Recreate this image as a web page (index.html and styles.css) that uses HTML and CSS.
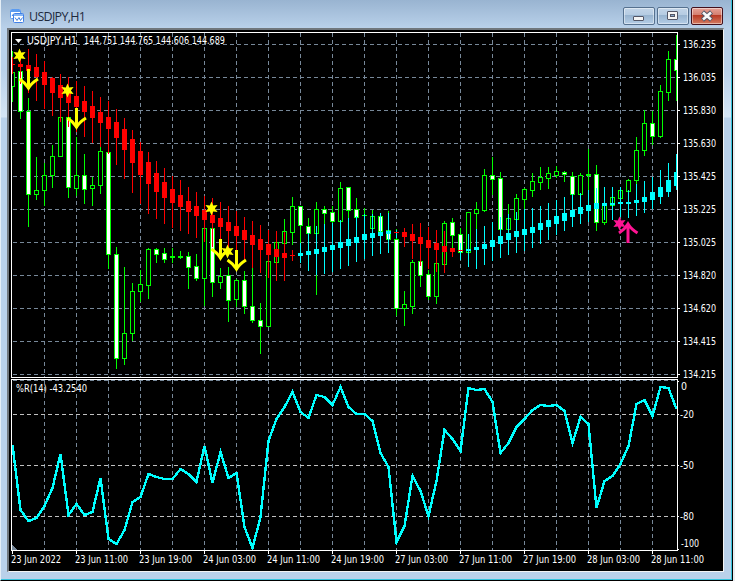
FILE: index.html
```html
<!DOCTYPE html>
<html lang="en">
  <head>
    <meta charset="UTF-8" />
    <meta name="viewport" content="width=device-width, initial-scale=1.0" />
    <title>USDJPY,H1</title>
    <link rel="stylesheet" href="styles.css">
  </head>
  <body>
    <div class="window">
      <header class="titlebar">
        <svg class="app-icon" width="15" height="15" viewBox="0 0 15 15">
          <rect x="0.5" y="0.5" width="10" height="9" rx="1" fill="#fff" stroke="#5b9bf0" />
          <path d="M1 2h9" stroke="#5b9bf0" stroke-width="2" />
          <path d="M2 7l1.500-2l1 1" fill="none" stroke="#3f80e0" />
          <rect x="3.500" y="4.500" width="10" height="9" rx="1" fill="#fff" stroke="#3f80e8" />
          <path d="M4 6h9" stroke="#5b9bf0" stroke-width="1.500" />
          <path d="M5 8.500l2 3l2-3l1.500 3l2-3" fill="none" stroke="#3f80e0" />
        </svg>
        <h1 class="title">USDJPY,H1</h1>
        <div class="controls">
          <button class="control" aria-label="Minimize">
            <svg width="12" height="12" viewBox="0 0 12 12">
              <rect x="0.500" y="6.500" width="10" height="4" rx="0.500" fill="#f4f4f4" stroke="#535666" />
            </svg>
          </button>
          <button class="control" aria-label="Maximize">
            <svg width="12" height="12" viewBox="0 0 12 12">
              <rect x="0.500" y="1.500" width="10" height="8" rx="0.500" fill="#f4f4f4" stroke="#535666" />
              <rect x="3.500" y="4.500" width="4" height="2" fill="#89a9c9" stroke="#535666" />
            </svg>
          </button>
          <button class="control close" aria-label="Close">
            <svg width="12" height="12" viewBox="0 0 12 12">
              <path d="M1.500 2L10.500 10M10.500 2L1.500 10" stroke="#535666" stroke-width="4.500" />
              <path d="M2 2.500L10 9.500M10 2.500L2 9.500" stroke="#f8f8f8" stroke-width="2.600" />
            </svg>
          </button>
        </div>
      </header>
      <main class="client">
        <svg id="chart" class="chart" width="714" height="541" viewBox="9 30 714 541"></svg>
      </main>
    </div>
    <script src="script.js"></script>
  </body>
</html>
```

FILE: styles.css
```css
body {
  margin: 0;
  background: #e9edf0;
}

.window {
  box-sizing: border-box;
  width: 733px;
  height: 581px;
  display: flex;
  flex-direction: column;
  background: linear-gradient(#99b4d1 0, #b9d1ea 28px, #b9d1ea 70px, #d5e5f5 117px, #b9d1ea 118px);
  border-left: 1px solid #e4eef6;
  border-right: 1px solid #000;
  border-bottom: 1px solid #000;
  box-shadow: inset -1px -1px #35c3dc;
  padding: 0 7px 7px 6px;
}

.titlebar {
  height: 28px;
  display: flex;
  align-items: flex-start;
}

.app-icon {
  margin: 9px 4px 0 3px;
}

.title {
  flex: 1;
  margin: 8px 0 0;
  font: 12.5px/17px "Open Sans", "Noto Sans", sans-serif;
  letter-spacing: -0.7px;
  color: #1e2a3c;
}

.controls {
  display: flex;
  gap: 2px;
  padding: 7px 2px 0 0;
}

.control {
  box-sizing: border-box;
  width: 32px;
  height: 18px;
  display: flex;
  align-items: center;
  justify-content: center;
  padding: 0;
  border: 1px solid #56718f;
  border-radius: 2px;
  background: linear-gradient(#c3d5e8 0, #b4cbe2 45%, #98b4d0 46%, #b4cde6 100%);
  box-shadow: inset 0 0 0 1px rgba(255, 255, 255, 0.45);
}

.close {
  border-color: #43101c;
  background: linear-gradient(#e6a398 0, #d37d6e 45%, #b83a24 46%, #d47c62 100%);
}

.client {
  border: 1px solid #808080;
  border-width: 2px 1px 1px 2px;
  border-color: #70777d #f4f4f4 #f4f4f4 #70777d;
  background: #000;
  width: 714px;
  height: 541px;
}

.chart {
  display: block;
  font: 11px "DejaVu Sans Condensed", "DejaVu Sans", sans-serif;
  shape-rendering: crispEdges;
}

.label {
  fill: #fff;
}

.grid {
  stroke: #778899;
  stroke-dasharray: 4 3;
}

.level {
  stroke: #c0c0c0;
  stroke-dasharray: 4 3;
}

.frame {
  stroke: #fff;
  fill: none;
}

.oscillator {
  fill: none;
  stroke: #00ffff;
  stroke-width: 2.4;
}

.smooth {
  shape-rendering: auto;
}

.arrow {
  fill: none;
  stroke-width: 3;
}
```

FILE: script.js
```js
const chart = document.getElementById("chart");
const GREEN = "#00ff00";
const RED = "#ff0000";
const AQUA = "#00ffff";
const YELLOW = "#ffff00";
const PINK = "#ff1493";

// high, body top, body bottom, low, 1 = bearish
const candles = [
  [51, 72, 86, 101, 0], [60, 71, 111, 118, 1], [98, 111, 194, 226, 1], [157, 190, 194, 199, 0],
  [163, 175, 190, 205, 0], [145, 156, 175, 187, 0], [117, 117, 156, 156, 0], [117, 117, 187, 197, 1],
  [137, 175, 188, 195, 0], [154, 175, 189, 203, 1], [177, 185, 188, 205, 0], [147, 151, 185, 193, 0],
  [152, 152, 254, 268, 1], [247, 254, 358, 368, 1], [267, 333, 358, 364, 0], [283, 291, 333, 340, 0],
  [270, 284, 291, 301, 0], [248, 249, 285, 298, 0], [248, 249, 254, 262, 1], [248, 253, 259, 262, 1],
  [248, 256, 257, 262, 0], [251, 256, 257, 258, 0], [252, 256, 267, 288, 1], [254, 266, 278, 280, 1],
  [228, 228, 278, 305, 0], [228, 228, 282, 296, 1], [268, 276, 282, 288, 0], [267, 275, 300, 321, 1],
  [279, 280, 299, 306, 0], [271, 280, 306, 313, 1], [260, 306, 320, 322, 1], [303, 320, 326, 353, 1],
  [261, 261, 326, 326, 0], [231, 242, 262, 262, 0], [219, 231, 243, 243, 0], [197, 206, 232, 244, 0],
  [206, 206, 225, 244, 1], [218, 226, 233, 235, 1], [202, 209, 233, 294, 0], [206, 209, 213, 226, 1],
  [206, 212, 221, 224, 1], [182, 188, 221, 221, 0], [187, 187, 210, 220, 1], [198, 209, 217, 217, 1],
  [208, 215, 215, 217, 0], [210, 216, 228, 228, 0], [216, 216, 231, 231, 1], [211, 230, 239, 239, 1],
  [229, 239, 308, 315, 1], [291, 304, 308, 325, 0], [260, 262, 306, 313, 0], [261, 261, 275, 286, 1],
  [270, 274, 296, 299, 1], [263, 263, 296, 303, 0], [221, 223, 264, 264, 0], [218, 222, 235, 250, 1],
  [228, 234, 252, 252, 1], [212, 212, 252, 252, 0], [202, 209, 213, 230, 0], [169, 175, 210, 211, 0],
  [157, 175, 179, 194, 1], [172, 178, 229, 229, 1], [204, 218, 229, 229, 0], [194, 198, 219, 219, 0],
  [188, 189, 199, 211, 0], [173, 181, 190, 196, 0], [167, 177, 182, 189, 0], [167, 173, 178, 188, 0],
  [166, 171, 175, 177, 0], [171, 172, 174, 181, 1], [172, 176, 194, 194, 1], [173, 175, 194, 194, 0],
  [149, 174, 175, 191, 0], [165, 174, 222, 230, 1], [204, 204, 222, 224, 0], [197, 197, 205, 205, 0],
  [187, 190, 198, 198, 0], [179, 180, 191, 191, 0], [137, 150, 180, 186, 0], [110, 123, 150, 155, 0],
  [111, 123, 136, 144, 1], [85, 91, 136, 137, 0], [51, 59, 92, 100, 0], [35, 59, 70, 100, 1]
];

// smoothed trend bars: high, body top, body bottom, low
const trend = [
  [57, 64, 65, 74], [51, 64, 67, 84], [49, 65, 71, 93], [54, 67, 77, 101],
  [61, 72, 85, 109], [77, 78, 93, 116], [74, 85, 98, 122], [77, 89, 103, 127],
  [81, 96, 107, 132], [86, 101, 112, 137], [91, 106, 118, 143], [97, 112, 123, 147],
  [101, 117, 129, 154], [109, 122, 138, 165], [118, 129, 150, 179], [130, 139, 163, 193],
  [142, 151, 175, 204], [152, 162, 184, 214], [161, 173, 192, 219], [168, 182, 198, 224],
  [176, 189, 203, 228], [180, 195, 207, 231], [187, 201, 212, 234], [192, 206, 216, 238],
  [196, 210, 220, 242], [198, 215, 223, 247], [202, 218, 227, 251], [206, 222, 231, 256],
  [211, 226, 236, 260], [217, 230, 240, 262], [221, 235, 245, 268], [225, 239, 250, 273],
  [230, 244, 255, 278], [231, 249, 257, 281], [232, 253, 258, 281], [250, 255, 256, 261],
  [243, 253, 256, 263], [233, 251, 255, 271], [226, 249, 254, 275], [224, 247, 252, 274],
  [223, 245, 250, 272], [220, 242, 248, 269], [218, 239, 246, 266], [216, 237, 243, 262],
  [214, 234, 240, 259], [214, 233, 238, 256], [213, 232, 236, 254], [213, 231, 234, 253],
  [230, 232, 233, 238], [228, 232, 237, 247], [224, 234, 241, 259], [223, 237, 244, 266],
  [227, 240, 248, 269], [230, 243, 250, 272], [231, 246, 252, 273], [248, 248, 252, 257],
  [243, 250, 251, 260], [234, 249, 251, 267], [229, 247, 250, 269], [226, 244, 249, 265],
  [222, 240, 247, 261], [217, 236, 244, 258], [214, 233, 240, 255], [212, 231, 237, 253],
  [209, 229, 235, 251], [208, 227, 233, 248], [206, 223, 230, 244], [203, 220, 227, 240],
  [200, 216, 224, 235], [197, 213, 221, 231], [194, 210, 217, 227], [193, 207, 214, 224],
  [190, 205, 211, 222], [188, 203, 209, 220], [187, 203, 206, 220], [187, 203, 205, 220],
  [187, 202, 204, 217], [190, 202, 204, 218], [184, 200, 203, 216], [181, 197, 202, 213],
  [177, 192, 200, 209], [170, 187, 197, 204], [163, 180, 192, 197], [154, 172, 186, 190]
];

const percentR = [
  445, 510, 521, 518, 506, 488, 454, 515, 504, 515, 512, 478, 539, 544, 530, 502, 497, 474, 477, 479, 479,
  469, 474, 482, 446, 483, 452, 478, 473, 527, 548, 517, 441, 419, 407, 392, 412, 418, 395, 397, 405, 387,
  407, 414, 414, 421, 453, 467, 542, 526, 476, 491, 516, 481, 430, 439, 451, 388, 390, 389, 402, 453, 443,
  427, 419, 410, 405, 406, 405, 411, 443, 417, 424, 508, 481, 476, 464, 446, 404, 400, 416, 387, 388, 409
];

function add(name, attrs, text) {
  const el = document.createElementNS("http://www.w3.org/2000/svg", name);
  for (const key in attrs) el.setAttribute(key, attrs[key]);
  if (text) el.textContent = text;
  chart.appendChild(el);
}

function rect(x, y, width, height, fill) {
  add("rect", { x, y, width, height, fill });
}

// bars stop at the price axis
function bar(x, y, width, height, fill) {
  rect(x, y, Math.min(width, 677 - x), height, fill);
}

function label(x, y, text, width) {
  add("text", { x, y, class: "label", textLength: width, lengthAdjust: "spacingAndGlyphs" }, text);
}

// grid
for (let x = 44; x < 677; x += 32) {
  add("path", { class: "grid", d: `M${x + 0.5} 33V377` });
  add("path", { class: "grid", d: `M${x + 0.5} 380V550` });
}
for (let y = 44; y < 377; y += 33) {
  add("path", { class: "grid", d: `M13 ${y + 0.5}H677` });
}
add("path", { class: "grid", d: "M13 380.5H677" });
[414, 465, 516].forEach((y) => add("path", { class: "level", d: `M13 ${y + 0.5}H677` }));

// candles
candles.forEach(([high, top, bottom, low, bear], i) => {
  const x = 12 + i * 8;
  const left = Math.max(x - 2, 12);
  bar(x, high, 1, low - high + 1, GREEN);
  bar(left, top, x + 3 - left, bottom - top + 1, GREEN);
  if (bottom - top > 1) {
    const inner = Math.max(x - 1, 12);
    bar(inner, top + 1, x + 2 - inner, bottom - top - 1, bear ? "#ffffff" : "#000000");
  }
});

// trend bars
trend.forEach(([high, top, bottom, low], i) => {
  const x = 12 + i * 8;
  const left = Math.max(x - 2, 12);
  const red = i < 36 || (i > 48 && i < 56);
  const color = red ? RED : AQUA;
  bar(x, high, 1, low - high, color);
  bar(left, top, x + 3 - left, bottom - top, i === 48 || i === 56 ? RED : color);
});

// signals
function star(cx, cy, color) {
  let points = "";
  for (let i = 0; i < 12; i++) {
    const r = i % 2 ? 3.4 : 7;
    const a = (i * Math.PI) / 6 - Math.PI / 2;
    points += `${(cx + r * Math.cos(a)).toFixed(1)},${(cy + r * Math.sin(a)).toFixed(1)} `;
  }
  add("polygon", { points, fill: color, class: "smooth" });
}

function arrow(x, tip, color, dir) {
  const d = `M${x} ${tip - 21 * dir}V${tip - dir} M${x - 9} ${tip - 11 * dir}Q${x - 3} ${tip - 7 * dir} ${x} ${tip - 2 * dir}Q${x + 3} ${tip - 7 * dir} ${x + 9.5} ${tip - 11 * dir}`;
  add("path", { d, class: "arrow smooth", stroke: color });
}

star(19.5, 55.5, YELLOW);
star(67.5, 90.5, YELLOW);
star(211.5, 208.5, YELLOW);
star(227.5, 251.5, YELLOW);
arrow(28.5, 90, YELLOW, 1);
arrow(76.5, 129, YELLOW, 1);
arrow(220.5, 260, YELLOW, 1);
arrow(236.5, 271, YELLOW, 1);
star(619.5, 223.5, PINK);
arrow(628, 222, PINK, -1);

// %R line
add("polyline", {
  class: "oscillator",
  points: percentR.map((y, i) => `${12.5 + i * 8},${y}`).join(" ")
});

// frames, ticks
add("path", { class: "frame", d: "M11.5 377.500V32.500H677.500V377.500Z" });
add("path", { class: "frame", d: "M11.5 550.500V379.500H677.500V550.500Z" });
add("path", { d: "M12 545V550H17Z", fill: "#778899" });

["136.235", "136.035", "135.830", "135.630", "135.425", "135.225", "135.025", "134.820", "134.620", "134.415", "134.215"].forEach((price, i) => {
  const y = 44 + i * 33;
  rect(678, y, 2, 1, "#ffffff");
  label(683, y + 4, price, 33);
});

label(681, 390, "0", 6);
label(680, 418, "-20", 14);
label(680, 469, "-50", 14);
label(680, 520, "-80", 14);
label(681, 547, "-100", 18);
[381, 414, 465, 516, 549].forEach((y) => rect(678, y, 1, 1, "#ffffff"));

["23 Jun 2022", "23 Jun 11:00", "23 Jun 19:00", "24 Jun 03:00", "24 Jun 11:00", "24 Jun 19:00", "27 Jun 03:00", "27 Jun 11:00", "27 Jun 19:00", "28 Jun 03:00", "28 Jun 11:00"].forEach((time, i) => {
  const x = 12 + i * 64;
  rect(x, 551, 1, 3, "#ffffff");
  label(x - 1, 563, time, i ? 53 : 50);
});

add("path", { d: "M15 39H22L18.500 43Z", fill: "#ffffff", class: "smooth" });
label(27, 44, "USDJPY,H1", 50);
label(84, 44, "144.751 144.765 144.606 144.689", 141);
label(16, 392, "%R(14) -43.2540", 71);
```
